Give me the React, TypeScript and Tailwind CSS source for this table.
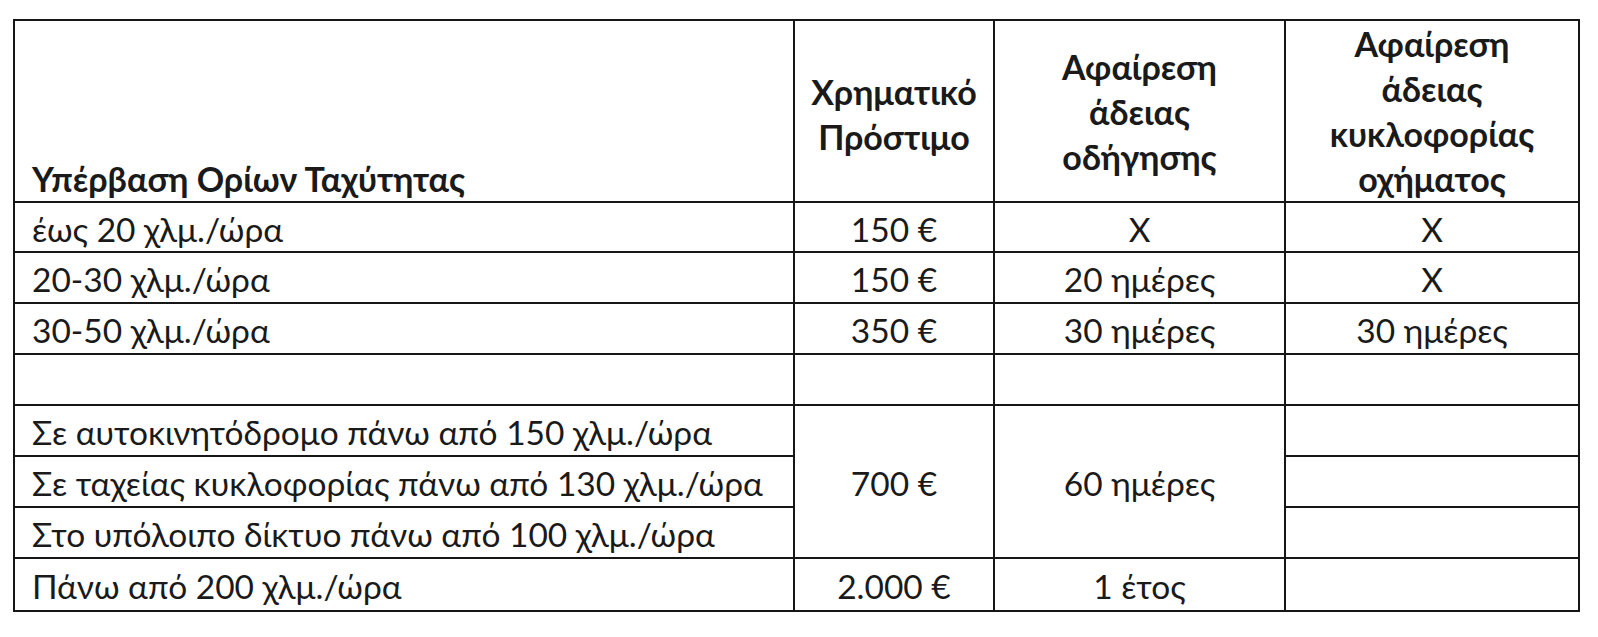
import React from 'react'

const rows = [
  { label: 'έως 20 χλμ./ώρα', fine: '150 €', licence: 'X', plates: 'X', h: 'h-[50px]' },
  { label: '20-30 χλμ./ώρα', fine: '150 €', licence: '20 ημέρες', plates: 'X', h: 'h-[51px]' },
  { label: '30-50 χλμ./ώρα', fine: '350 €', licence: '30 ημέρες', plates: '30 ημέρες', h: 'h-[51px]' },
  { label: '', fine: '', licence: '', plates: '', h: 'h-[51px]' },
]

const cell = 'border-2 border-[#161616] p-0'
const td = `${cell} pt-[3px]`

export default function App() {
  return (
    <div className="min-h-screen bg-white pt-[19px] pl-[13px] text-[#1a1a1a] font-['Lato','Open_Sans',sans-serif] text-[33.5px]">
      <table className="table-fixed border-collapse w-[1565px]">
        <colgroup>
          <col className="w-[780px]" />
          <col className="w-[200px]" />
          <col className="w-[291px]" />
          <col className="w-[294px]" />
        </colgroup>
        <thead>
          <tr className="h-[180px] font-bold leading-[45px] text-[34px]">
            <th className={`${cell} align-bottom text-left pl-[17px]`}>Υπέρβαση Ορίων Ταχύτητας</th>
            <th className={`${cell} align-middle text-center pt-[5px]`}>
              Χρηματικό
              <br />
              Πρόστιμο
            </th>
            <th className={`${cell} align-middle text-center`}>
              Αφαίρεση
              <br />
              άδειας
              <br />
              οδήγησης
            </th>
            <th className={`${cell} align-middle text-center`}>
              Αφαίρεση
              <br />
              άδειας
              <br />
              κυκλοφορίας
              <br />
              οχήματος
            </th>
          </tr>
        </thead>
        <tbody className="leading-[40px]">
          {rows.map((r, i) => (
            <tr key={i} className={r.h}>
              <td className={`${td} pl-[17px]`}>{r.label}</td>
              <td className={`${td} text-center`}>{r.fine}</td>
              <td className={`${td} text-center`}>{r.licence}</td>
              <td className={`${td} text-center`}>{r.plates}</td>
            </tr>
          ))}
          <tr className="h-[51px]">
            <td className={`${td} pl-[17px]`}>Σε αυτοκινητόδρομο πάνω από 150 χλμ./ώρα</td>
            <td rowSpan={3} className={`${td} text-center`}>700 €</td>
            <td rowSpan={3} className={`${td} text-center`}>60 ημέρες</td>
            <td className={td}></td>
          </tr>
          <tr className="h-[51px]">
            <td className={`${td} pl-[17px]`}>Σε ταχείας κυκλοφορίας πάνω από 130 χλμ./ώρα</td>
            <td className={td}></td>
          </tr>
          <tr className="h-[51px]">
            <td className={`${td} pl-[17px]`}>Στο υπόλοιπο δίκτυο πάνω από 100 χλμ./ώρα</td>
            <td className={td}></td>
          </tr>
          <tr className="h-[53px]">
            <td className={`${td} pl-[17px]`}>Πάνω από 200 χλμ./ώρα</td>
            <td className={`${td} text-center`}>2.000 €</td>
            <td className={`${td} text-center`}>1 έτος</td>
            <td className={td}></td>
          </tr>
        </tbody>
      </table>
    </div>
  )
}
